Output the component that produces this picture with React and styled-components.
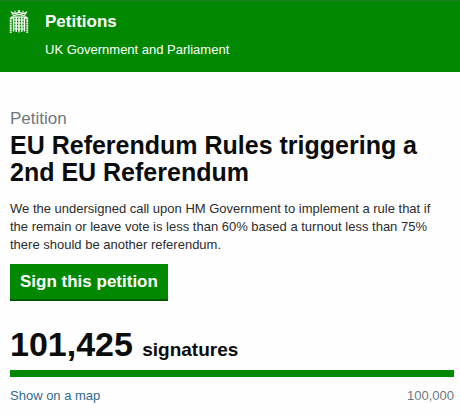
import styled, { createGlobalStyle } from 'styled-components';

const GlobalStyle = createGlobalStyle`
  * {
    box-sizing: border-box;
  }

  body {
    margin: 0;
    background: #fefefe;
    color: #0b0c0c;
    font-family: Arial, 'Liberation Sans', sans-serif;
    font-size: 13px;
    line-height: 18px;
  }
`;

const Header = styled.header`
  display: flex;
  gap: 16px;
  padding: 9px 6px 13px 9px;
  border-top: 1px solid #1f7a1f;
  background: #008800;
  color: #fff;
`;

const Crest = styled.svg`
  flex: none;
  width: 20px;
  height: 23px;
`;

const Brand = styled.div`
  display: flex;
  flex-direction: column;
  gap: 7px;
`;

const BrandLink = styled.a`
  color: inherit;
  font-size: 17px;
  font-weight: bold;
  line-height: 24px;
  text-decoration: none;
`;

const Main = styled.main`
  padding: 37px 6px 10px 10px;
`;

const Title = styled.h1`
  margin: 0 0 14px;
  font-size: 25px;
  line-height: 27px;
`;

const TitleLabel = styled.span`
  display: block;
  margin-bottom: 3px;
  color: #6f777b;
  font-size: 17px;
  font-weight: normal;
  line-height: 20px;
`;

const Description = styled.p`
  margin: 0 0 10px;
  padding-right: 10px;
  color: #2b2c2c;
`;

const SignButton = styled.button`
  display: block;
  padding: 7px 10px;
  border: 0;
  border-bottom: 2px solid #005a00;
  background: #008800;
  color: #fff;
  font-family: inherit;
  font-size: 17px;
  font-weight: bold;
  line-height: 21px;
`;

const SignatureCount = styled.p`
  margin: 25px 0 2px;
  font-size: 19px;
  font-weight: bold;
  line-height: 36px;
`;

const Count = styled.span`
  margin-right: 4px;
  font-size: 34px;
`;

const ProgressTrack = styled.div`
  height: 7px;
  background: #dee0e2;
`;

const ProgressBar = styled.div`
  height: 100%;
  background: #008800;
`;

const GraphFooter = styled.div`
  display: flex;
  justify-content: space-between;
  margin-top: 10px;
  color: #6f777b;
`;

const MapLink = styled.a`
  color: #2e6b8e;
  text-decoration: none;
`;

const petition = {
  action: 'EU Referendum Rules triggering a 2nd EU Referendum',
  background:
    'We the undersigned call upon HM Government to implement a rule that if the remain or leave vote is less than 60% based a turnout less than 75% there should be another referendum.',
  signatures: 101425,
  threshold: 100000,
};

const Portcullis = () => (
  <Crest viewBox="0 0 20 23" fill="none" stroke="#fff" aria-hidden="true">
    {/* crown */}
    <path d="M4.5 5.5L2 1.5M15.5 5.5L18 1.5M2 2Q6 5 10 2Q14 5 18 2M4.5 5.8Q10 3.5 15.5 5.8" strokeWidth="1.1" />
    <path d="M10 0v3.5M8.8 1h2.4M6 0.8v2.6M14 0.8v2.6" strokeWidth="1.1" />
    {/* gate */}
    <path d="M3.6 7h12.8" strokeWidth="1.2" />
    <path d="M4.5 7v14.5M7.2 7v15M10 7v15.5M12.8 7v15M15.5 7v14.5" strokeWidth="1.4" />
    <path d="M4.5 10h11M4.5 13h11M4.5 16h11M4.5 19h11" strokeWidth="1" />
    {/* chains */}
    <path d="M4 7.5H1.7V23M16 7.5h2.3V23" strokeWidth="1.8" strokeDasharray="1.9 0.5" />
  </Crest>
);

const App = () => {
  const { action, background, signatures, threshold } = petition;
  const progress = Math.min(100, (signatures / threshold) * 100);

  return (
    <>
      <GlobalStyle />
      <Header>
        <Portcullis />
        <Brand>
          <BrandLink href="#">Petitions</BrandLink>
          <span>UK Government and Parliament</span>
        </Brand>
      </Header>
      <Main>
        <Title>
          <TitleLabel>Petition</TitleLabel>
          {action}
        </Title>
        <Description>{background}</Description>
        <SignButton type="button">Sign this petition</SignButton>
        <SignatureCount>
          <Count>{signatures.toLocaleString('en-GB')}</Count> signatures
        </SignatureCount>
        <ProgressTrack>
          <ProgressBar style={{ width: `${progress}%` }} />
        </ProgressTrack>
        <GraphFooter>
          <MapLink href="#">Show on a map</MapLink>
          <span>{threshold.toLocaleString('en-GB')}</span>
        </GraphFooter>
      </Main>
    </>
  );
};

export default App;
